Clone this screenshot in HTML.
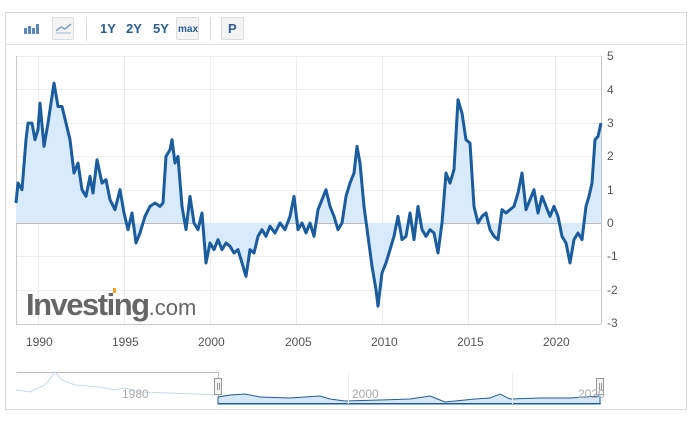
<!DOCTYPE html>
<html><head><meta charset="utf-8"><style>
body{margin:0;width:700px;height:421px;background:#fff;font-family:"Liberation Sans",sans-serif;overflow:hidden;position:relative}
.box{position:absolute;left:5px;top:12px;width:682px;height:398px;border:1px solid #d8d8d8;box-sizing:border-box}
.tb{position:absolute;left:5px;top:44px;width:682px;height:1px;background:#e2e2e2}
.t{position:absolute;top:21px;font-size:13px;font-weight:bold;color:#2b5c94}
.btn{position:absolute;top:17px;height:23px;border:1px solid #ddd;border-radius:2px;background:#f4f4f4;box-sizing:border-box}
.sep{position:absolute;top:17px;width:1px;height:24px;background:#ddd}
.yl{position:absolute;left:607px;font-size:12px;color:#555}
.xl{position:absolute;top:335px;font-size:12px;color:#555}
</style></head><body>
<div class="box"></div><div class="tb"></div>
<svg style="position:absolute;left:24px;top:24px" width="16" height="10"><rect x="0" y="4" width="3" height="6" fill="#5a88bd"/><rect x="4" y="2" width="3" height="8" fill="#5a88bd"/><rect x="8" y="4" width="3" height="6" fill="#5a88bd"/><rect x="12" y="0" width="3" height="10" fill="#5a88bd"/></svg>
<div class="btn" style="left:52px;width:22px"></div>
<svg style="position:absolute;left:55px;top:21px" width="17" height="14"><path d="M1 10 L6 6 L10 8 L16 3" stroke="#7ea3cc" stroke-width="1.5" fill="none"/><path d="M1 12 H16" stroke="#9bb8d8" stroke-width="1"/></svg>
<div class="sep" style="left:86px"></div>
<div class="t" style="left:100px">1Y</div><div class="t" style="left:126px">2Y</div><div class="t" style="left:153px">5Y</div>
<div class="btn" style="left:176px;width:23px"></div><div class="t" style="left:178px;font-size:10px;top:24px">max</div>
<div class="sep" style="left:210px"></div>
<div class="btn" style="left:221px;width:23px"></div><div class="t" style="left:228px">P</div>
<svg style="position:absolute;left:0;top:0" width="700" height="421">
<g stroke="#ececec" stroke-width="1">
<path d="M16 56.5H601M16 89.5H601M16 123.5H601M16 156.5H601M16 190.5H601M16 256.5H601M16 290.5H601"/>
<path d="M38.5 56V324M124.5 56V324M210.5 56V324M296.5 56V324M382.5 56V324M468.5 56V324M555.5 56V324"/>
</g>
<path d="M16 223.5H601" stroke="#bbb"/>
<path d="M16.5 56V324.5H601M601.5 56V324" stroke="#c8c8c8" fill="none"/>
<g transform="translate(0,223) scale(1,-33.3)">
<polygon fill="#d8eafb" points="16,0 16,0.6 18,1.2 22,1.0 26,2.5 28,3.0 32,3.0 35,2.5 38,2.8 40,3.6 44,2.3 48,3.0 54,4.2 58,3.5 62,3.5 66,3.0 70,2.5 74,1.5 78,1.8 82,1.0 86,0.8 90,1.4 93,0.9 97,1.9 102,1.2 106,1.3 110,0.7 115,0.4 120,1.0 124,0.3 128,-0.2 132,0.3 136,-0.6 140,-0.3 145,0.2 150,0.5 155,0.6 160,0.5 163,0.6 166,2.0 170,2.2 172,2.5 175,1.8 178,2.0 182,0.5 186,-0.2 190,0.8 194,0 198,-0.2 202,0.3 206,-1.2 210,-0.6 214,-0.8 218,-0.5 222,-0.8 226,-0.6 230,-0.7 234,-0.9 238,-0.8 242,-1.2 246,-1.6 250,-0.8 254,-0.9 258,-0.4 262,-0.2 266,-0.4 270,-0.1 275,-0.3 280,0 285,-0.2 290,0.2 294,0.8 298,-0.2 302,0 306,-0.3 310,0 314,-0.4 318,0.4 322,0.7 326,1.0 330,0.5 334,0.2 338,-0.2 342,0 346,0.8 350,1.2 354,1.5 357,2.3 360,1.8 364,0.5 368,-0.4 372,-1.3 376,-2.0 378,-2.5 382,-1.5 386,-1.2 390,-0.8 394,-0.4 398,0.2 402,-0.5 406,-0.4 410,0.3 414,-0.5 418,0.5 422,-0.2 426,-0.4 430,-0.2 434,-0.3 438,-0.9 442,0 446,1.5 450,1.2 454,1.6 458,3.7 462,3.3 466,2.5 470,2.4 474,0.5 478,0 482,0.2 486,0.3 490,-0.2 494,-0.4 498,-0.5 502,0.4 506,0.3 510,0.4 514,0.5 518,0.9 522,1.5 526,0.4 530,0.7 534,1.0 538,0.3 542,0.8 546,0.5 550,0.2 554,0.5 558,0.2 562,-0.4 566,-0.6 570,-1.2 574,-0.5 578,-0.3 582,-0.5 586,0.5 589,0.8 592,1.2 595,2.5 598,2.6 601,3.0 601,0"/>
<polyline fill="none" stroke="#1a5c9e" stroke-width="3" stroke-linejoin="round" vector-effect="non-scaling-stroke" points="16,0.6 18,1.2 22,1.0 26,2.5 28,3.0 32,3.0 35,2.5 38,2.8 40,3.6 44,2.3 48,3.0 54,4.2 58,3.5 62,3.5 66,3.0 70,2.5 74,1.5 78,1.8 82,1.0 86,0.8 90,1.4 93,0.9 97,1.9 102,1.2 106,1.3 110,0.7 115,0.4 120,1.0 124,0.3 128,-0.2 132,0.3 136,-0.6 140,-0.3 145,0.2 150,0.5 155,0.6 160,0.5 163,0.6 166,2.0 170,2.2 172,2.5 175,1.8 178,2.0 182,0.5 186,-0.2 190,0.8 194,0 198,-0.2 202,0.3 206,-1.2 210,-0.6 214,-0.8 218,-0.5 222,-0.8 226,-0.6 230,-0.7 234,-0.9 238,-0.8 242,-1.2 246,-1.6 250,-0.8 254,-0.9 258,-0.4 262,-0.2 266,-0.4 270,-0.1 275,-0.3 280,0 285,-0.2 290,0.2 294,0.8 298,-0.2 302,0 306,-0.3 310,0 314,-0.4 318,0.4 322,0.7 326,1.0 330,0.5 334,0.2 338,-0.2 342,0 346,0.8 350,1.2 354,1.5 357,2.3 360,1.8 364,0.5 368,-0.4 372,-1.3 376,-2.0 378,-2.5 382,-1.5 386,-1.2 390,-0.8 394,-0.4 398,0.2 402,-0.5 406,-0.4 410,0.3 414,-0.5 418,0.5 422,-0.2 426,-0.4 430,-0.2 434,-0.3 438,-0.9 442,0 446,1.5 450,1.2 454,1.6 458,3.7 462,3.3 466,2.5 470,2.4 474,0.5 478,0 482,0.2 486,0.3 490,-0.2 494,-0.4 498,-0.5 502,0.4 506,0.3 510,0.4 514,0.5 518,0.9 522,1.5 526,0.4 530,0.7 534,1.0 538,0.3 542,0.8 546,0.5 550,0.2 554,0.5 558,0.2 562,-0.4 566,-0.6 570,-1.2 574,-0.5 578,-0.3 582,-0.5 586,0.5 589,0.8 592,1.2 595,2.5 598,2.6 601,3.0"/>
</g>
<path d="M16.5 372.5H218.5V403" stroke="#bbb" fill="none"/>
<path d="M16 390 L30 392 L45 385 L55 372 L62 380 L75 385 L100 387 L115 390 L125 388 L140 392 L170 393 L218 395" stroke="#c6d8ea" fill="none"/>
<path d="M218 397 L230 395 L245 394 L260 397 L290 398 L320 396 L330 399 L345 401 L380 400 L410 399 L430 396 L445 402 L475 399 L490 398 L500 394 L510 399 L540 398 L570 398 L600 396 V404 H218Z" fill="#d5e7f9" stroke="#1f5c99" stroke-width="1"/>
<path d="M218 403.5H601" stroke="#1f5c99"/>
<path d="M348.5 372V404M512.5 372V404" stroke="#eee"/>
<rect x="214.5" y="378.5" width="7" height="16" fill="#f2f2f2" stroke="#999"/>
<rect x="596.5" y="378.5" width="7" height="16" fill="#f2f2f2" stroke="#999"/>
<path d="M217.5 383V390M219.5 383V390M599.5 383V390M601.5 383V390" stroke="#999"/>
<text x="122" y="398" font-size="12" fill="#aaa" font-family="Liberation Sans">1980</text>
<text x="352" y="398" font-size="12" fill="#aaa" font-family="Liberation Sans">2000</text>
<text x="578" y="398" font-size="12" fill="#aaa" font-family="Liberation Sans">2020</text>
<text x="26" y="315" font-size="31" font-weight="bold" fill="#666" font-family="Liberation Sans" letter-spacing="-1.5">Investing<tspan font-weight="normal" font-size="22" letter-spacing="0">.com</tspan></text>
<rect x="113" y="288" width="3" height="5" fill="#f5a623"/>
</svg>
<div class="yl" style="top:49px">5</div><div class="yl" style="top:83px">4</div><div class="yl" style="top:116px">3</div><div class="yl" style="top:149px">2</div><div class="yl" style="top:183px">1</div><div class="yl" style="top:216px">0</div><div class="yl" style="top:249px">-1</div><div class="yl" style="top:283px">-2</div><div class="yl" style="top:316px">-3</div>
<div class="xl" style="left:26px">1990</div><div class="xl" style="left:112px">1995</div><div class="xl" style="left:198px">2000</div><div class="xl" style="left:285px">2005</div><div class="xl" style="left:371px">2010</div><div class="xl" style="left:457px">2015</div><div class="xl" style="left:543px">2020</div>
</body></html>
